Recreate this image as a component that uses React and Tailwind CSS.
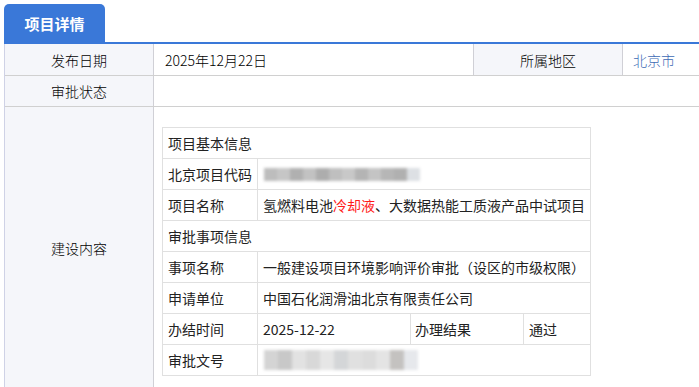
export default function App() {
  const font = "font-['Noto_Sans_CJK_SC','Microsoft_YaHei',sans-serif]";
  const codeBlur = ["#bdbdbd", "#c6c6c6", "#b0b0b0", "#c2c2c2", "#adadad", "#bfbfbf", "#c8c8c8", "#b4b4b4", "#c4c4c4", "#b6b6b6", "#b0b0b0", "#dde0e4"];
  const docBlur = ["#d4d4d4", "#c8c8c8", "#e2e2e2", "#d8d8d8", "#e6e6e6", "#d4d6d8", "#e0e0e0", "#dcdcdc", "#e4e4e4", "#c4c2c0", "#e6e8ec"];
  return (
    <div className={`w-[699px] h-[387px] overflow-hidden bg-white ${font} text-[14px] leading-none text-black`}>
      <div className="pt-[4px] pl-[4px]">
        <div className="w-[101px] h-[38px] bg-[#3a78d8] rounded-t-[5px] text-white font-bold text-[15px] flex items-center justify-center">
          项目详情
        </div>
      </div>
      <div className="ml-[4px] h-[2px] bg-[#3a78d8]" />
      <div className="ml-[4px] border-l border-[#cfd2e6] w-[720px] font-light">
        <div className="flex h-[32px] border-b border-[#d0d0d0]">
          <div className="w-[149px] shrink-0 bg-[#f5f6fa] border-r border-[#d0d0d6] flex items-center justify-center">发布日期</div>
          <div className="w-[320px] shrink-0 border-r border-[#d0d0d6] flex items-center pl-[11px]">2025年12月22日</div>
          <div className="w-[149px] shrink-0 bg-[#f5f6fa] border-r border-[#d0d0d6] flex items-center justify-center">所属地区</div>
          <div className="flex-1 flex items-center pl-[10px] text-[#3d6ab5]">北京市</div>
        </div>
        <div className="flex h-[31px] border-b border-[#d0d0d0]">
          <div className="w-[149px] shrink-0 bg-[#f5f6fa] border-r border-[#d0d0d6] flex items-center justify-center">审批状态</div>
          <div className="flex-1" />
        </div>
        <div className="flex h-[281px]">
          <div className="w-[149px] shrink-0 bg-[#f5f6fa] border-r border-[#d0d0d6] flex items-center justify-center">建设内容</div>
          <div className="flex-1 pt-[20px] pl-[8px] font-normal">
            <div className="w-[429px] border-t border-l border-[#e0e0e0] text-[#222]">
              <div className="flex h-[31px] border-b border-r border-[#e0e0e0]">
                <div className="flex items-center pl-[5px]">项目基本信息</div>
              </div>
              <div className="flex h-[31px] border-b border-[#e0e0e0]">
                <div className="w-[95px] shrink-0 border-r border-[#e0e0e0] flex items-center pl-[5px]">北京项目代码</div>
                <div className="flex-1 border-r border-[#e0e0e0] flex items-center pl-[5px]">
                  <div className="flex h-[13px] blur-[1.5px] ml-[1px]">
                    {codeBlur.map((c, i) => (
                      <div key={i} className="w-[13px] h-full" style={{ background: c }} />
                    ))}
                  </div>
                </div>
              </div>
              <div className="flex h-[31px] border-b border-[#e0e0e0]">
                <div className="w-[95px] shrink-0 border-r border-[#e0e0e0] flex items-center pl-[5px]">项目名称</div>
                <div className="flex-1 border-r border-[#e0e0e0] flex items-center pl-[5px] whitespace-nowrap">
                  氢燃料电池<span className="text-[#ff1a1a]">冷却液</span>、大数据热能工质液产品中试项目
                </div>
              </div>
              <div className="flex h-[31px] border-b border-r border-[#e0e0e0]">
                <div className="flex items-center pl-[5px]">审批事项信息</div>
              </div>
              <div className="flex h-[31px] border-b border-[#e0e0e0]">
                <div className="w-[95px] shrink-0 border-r border-[#e0e0e0] flex items-center pl-[5px]">事项名称</div>
                <div className="flex-1 border-r border-[#e0e0e0] flex items-center pl-[5px] whitespace-nowrap">一般建设项目环境影响评价审批（设区的市级权限）</div>
              </div>
              <div className="flex h-[31px] border-b border-[#e0e0e0]">
                <div className="w-[95px] shrink-0 border-r border-[#e0e0e0] flex items-center pl-[5px]">申请单位</div>
                <div className="flex-1 border-r border-[#e0e0e0] flex items-center pl-[5px]">中国石化润滑油北京有限责任公司</div>
              </div>
              <div className="flex h-[31px] border-b border-[#e0e0e0]">
                <div className="w-[95px] shrink-0 border-r border-[#e0e0e0] flex items-center pl-[5px]">办结时间</div>
                <div className="w-[153px] shrink-0 border-r border-[#e0e0e0] flex items-center pl-[5px]">2025-12-22</div>
                <div className="w-[113px] shrink-0 border-r border-[#e0e0e0] flex items-center pl-[4px]">办理结果</div>
                <div className="flex-1 border-r border-[#e0e0e0] flex items-center pl-[5px]">通过</div>
              </div>
              <div className="flex h-[31px] border-b border-[#e0e0e0]">
                <div className="w-[95px] shrink-0 border-r border-[#e0e0e0] flex items-center pl-[5px]">审批文号</div>
                <div className="flex-1 border-r border-[#e0e0e0] flex items-center pl-[5px]">
                  <div className="flex h-[20px] blur-[1.5px] ml-[1px]">
                    {docBlur.map((c, i) => (
                      <div key={i} className="w-[14px] h-full" style={{ background: c }} />
                    ))}
                  </div>
                </div>
              </div>
            </div>
          </div>
        </div>
      </div>
    </div>
  );
}
